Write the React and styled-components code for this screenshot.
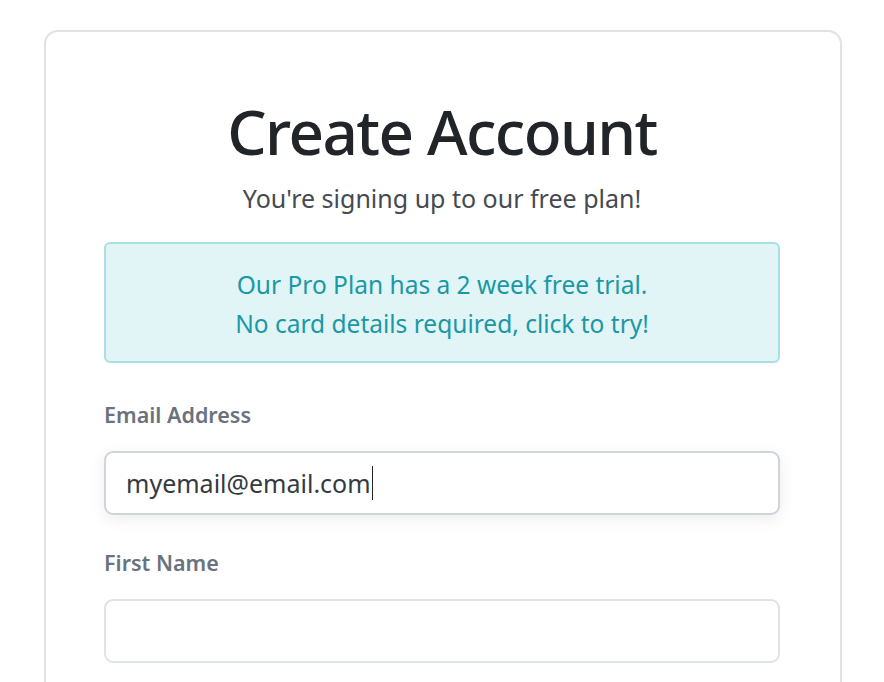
import React from 'react'
import styled, { createGlobalStyle } from "styled-components"

const GlobalStyle = createGlobalStyle`
    body {
        margin: 0;
        background: #fff;
        font-family: "Noto Sans", "Open Sans", sans-serif;
    }
`;

const App = () => {
    return (
        <>
            <GlobalStyle />
            <Card>
                <Title>Create Account</Title>
                <Subtitle>You're signing up to our free plan!</Subtitle>
                <Notice>
                    <div>Our Pro Plan has a 2 week free trial.</div>
                    <div>No card details required, click to try!</div>
                </Notice>
                <Group gap={37}>
                    <Label>Email Address</Label>
                    <Field focused>
                        myemail@email.com<Caret />
                    </Field>
                </Group>
                <Group gap={33}>
                    <Label>First Name</Label>
                    <Field />
                </Group>
            </Card>
        </>
    )
}

export default App;

const Card = styled.div`
    width: 798px;
    box-sizing: border-box;
    margin: 30px 0 0 44px;
    padding: 57px 60px 80px 58px;
    border: 2px solid #e2e2e2;
    border-radius: 14px;
    min-height: 700px;
`;

const Title = styled.h1`
    margin: 0;
    text-align: center;
    font-size: 62px;
    font-weight: 500;
    line-height: 84px;
    letter-spacing: -1.6px;
    color: #212529;
`;

const Subtitle = styled.p`
    margin: 8px 0 27px;
    text-align: center;
    font-size: 25px;
    line-height: 34px;
    color: #454a50;
`;

const Notice = styled.div`
    background: #e1f4f6;
    border: 2px solid #a9e0e5;
    border-radius: 6px;
    padding: 21px 20px 18px;
    text-align: center;
    color: #1a98a5;
    font-size: 24.5px;
    line-height: 39px;
`;

const Group = styled.div`
    margin-top: ${p => p.gap}px;
`;

const Label = styled.div`
    font-size: 21.5px;
    font-weight: 600;
    line-height: 30px;
    color: #6a737d;
    margin-bottom: 21px;
`;

const Field = styled.div`
    height: 64px;
    box-sizing: border-box;
    border: 2px solid ${p => p.focused ? "#cfd3da" : "#dfe2e7"};
    border-radius: 9px;
    padding: 0 20px;
    display: flex;
    align-items: center;
    font-size: 25px;
    color: #343a40;
    box-shadow: ${p => p.focused ? "0 4px 16px rgba(0,0,0,0.08)" : "none"};
`;

const Caret = styled.span`
    display: inline-block;
    width: 1px;
    height: 34px;
    background: #222;
    margin-left: 1px;
`;
